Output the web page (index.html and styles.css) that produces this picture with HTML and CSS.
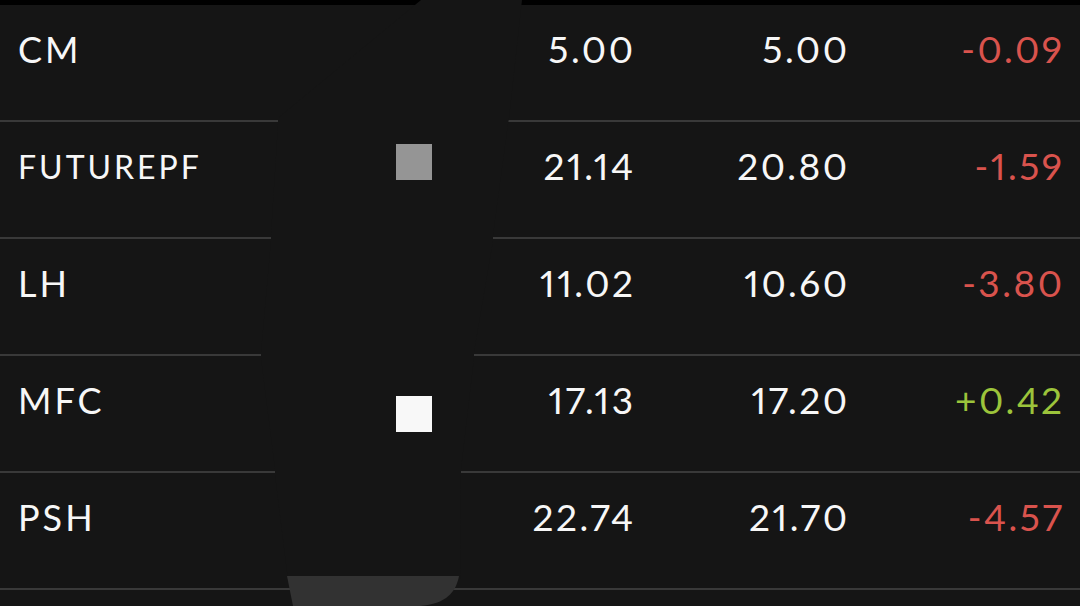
FILE: index.html
```html
<!DOCTYPE html>
<html>
<head>
<meta charset="utf-8">
<link rel="stylesheet" href="styles.css">
</head>
<body>
<div class="screen">
  <div class="statusbar"></div>
  <div class="list">
    <div class="row">
      <div class="name">CM</div>
      <div class="mark"></div>
      <div class="num">5.00</div>
      <div class="num">5.00</div>
      <div class="num down">-0.09</div>
    </div>
    <div class="row">
      <div class="name small">FUTUREPF</div>
      <div class="mark"><span class="sq sq-gray"></span></div>
      <div class="num">21.14</div>
      <div class="num">20.80</div>
      <div class="num down">-1.59</div>
    </div>
    <div class="row">
      <div class="name">LH</div>
      <div class="mark"></div>
      <div class="num">11.02</div>
      <div class="num">10.60</div>
      <div class="num down">-3.80</div>
    </div>
    <div class="row">
      <div class="name">MFC</div>
      <div class="mark"><span class="sq sq-white"></span></div>
      <div class="num">17.13</div>
      <div class="num">17.20</div>
      <div class="num up">+0.42</div>
    </div>
    <div class="row">
      <div class="name">PSH</div>
      <div class="mark"></div>
      <div class="num">22.74</div>
      <div class="num">21.70</div>
      <div class="num down">-4.57</div>
    </div>
  </div>
  <svg class="ghost" width="1080" height="606" viewBox="0 0 1080 606">
    <polygon fill="#151515" points="421,0 522,0 509,118 508,124 493,235 493,241 474,352 474,358 461,469 461,475 460,580 288,580 275,475 275,469 261,358 261,352 271,241 271,235 278,124 278,118"/>
    <path fill="#323232" d="M287,576 L459,576 C456,592 446,604 420,606 L293,606 Z"/>
  </svg>
</div>
</body>
</html>
```
FILE: styles.css
```css
html, body {
  margin: 0;
  padding: 0;
  background: #151515;
}
.screen {
  position: relative;
  width: 1080px;
  height: 606px;
  overflow: hidden;
  background: #151515;
  font-family: "Lato", "Liberation Sans", sans-serif;
  font-weight: 400;
  color: #f7f7f7;
}
.statusbar {
  height: 5px;
  background: #000;
}
.row {
  display: grid;
  grid-template-columns: 378px 36px 201px 214px 215px;
  padding: 0 18px;
  height: 115px;
  border-bottom: 2px solid #393939;
}
.name, .num {
  font-size: 36px;
  line-height: 36px;
  padding-top: 26px;
  white-space: nowrap;
}
.name {
  letter-spacing: 3px;
}
.name.small {
  font-size: 32px;
  padding-top: 27px;
  letter-spacing: 3px;
}
.num {
  text-align: right;
  font-size: 37px;
  letter-spacing: 2.5px;
  margin-right: -2.5px;
  font-variant-numeric: proportional-nums;
}
.down { color: #d9534d; }
.up { color: #9cc43b; }
.mark {
  position: relative;
  z-index: 2;
}
.sq {
  display: block;
  width: 36px;
  height: 36px;
}
.sq-gray {
  background: #959595;
  margin-top: 22px;
}
.sq-white {
  background: #f8f8f8;
  margin-top: 40px;
}
.ghost {
  position: absolute;
  left: 0;
  top: 0;
  z-index: 1;
  pointer-events: none;
}
```
